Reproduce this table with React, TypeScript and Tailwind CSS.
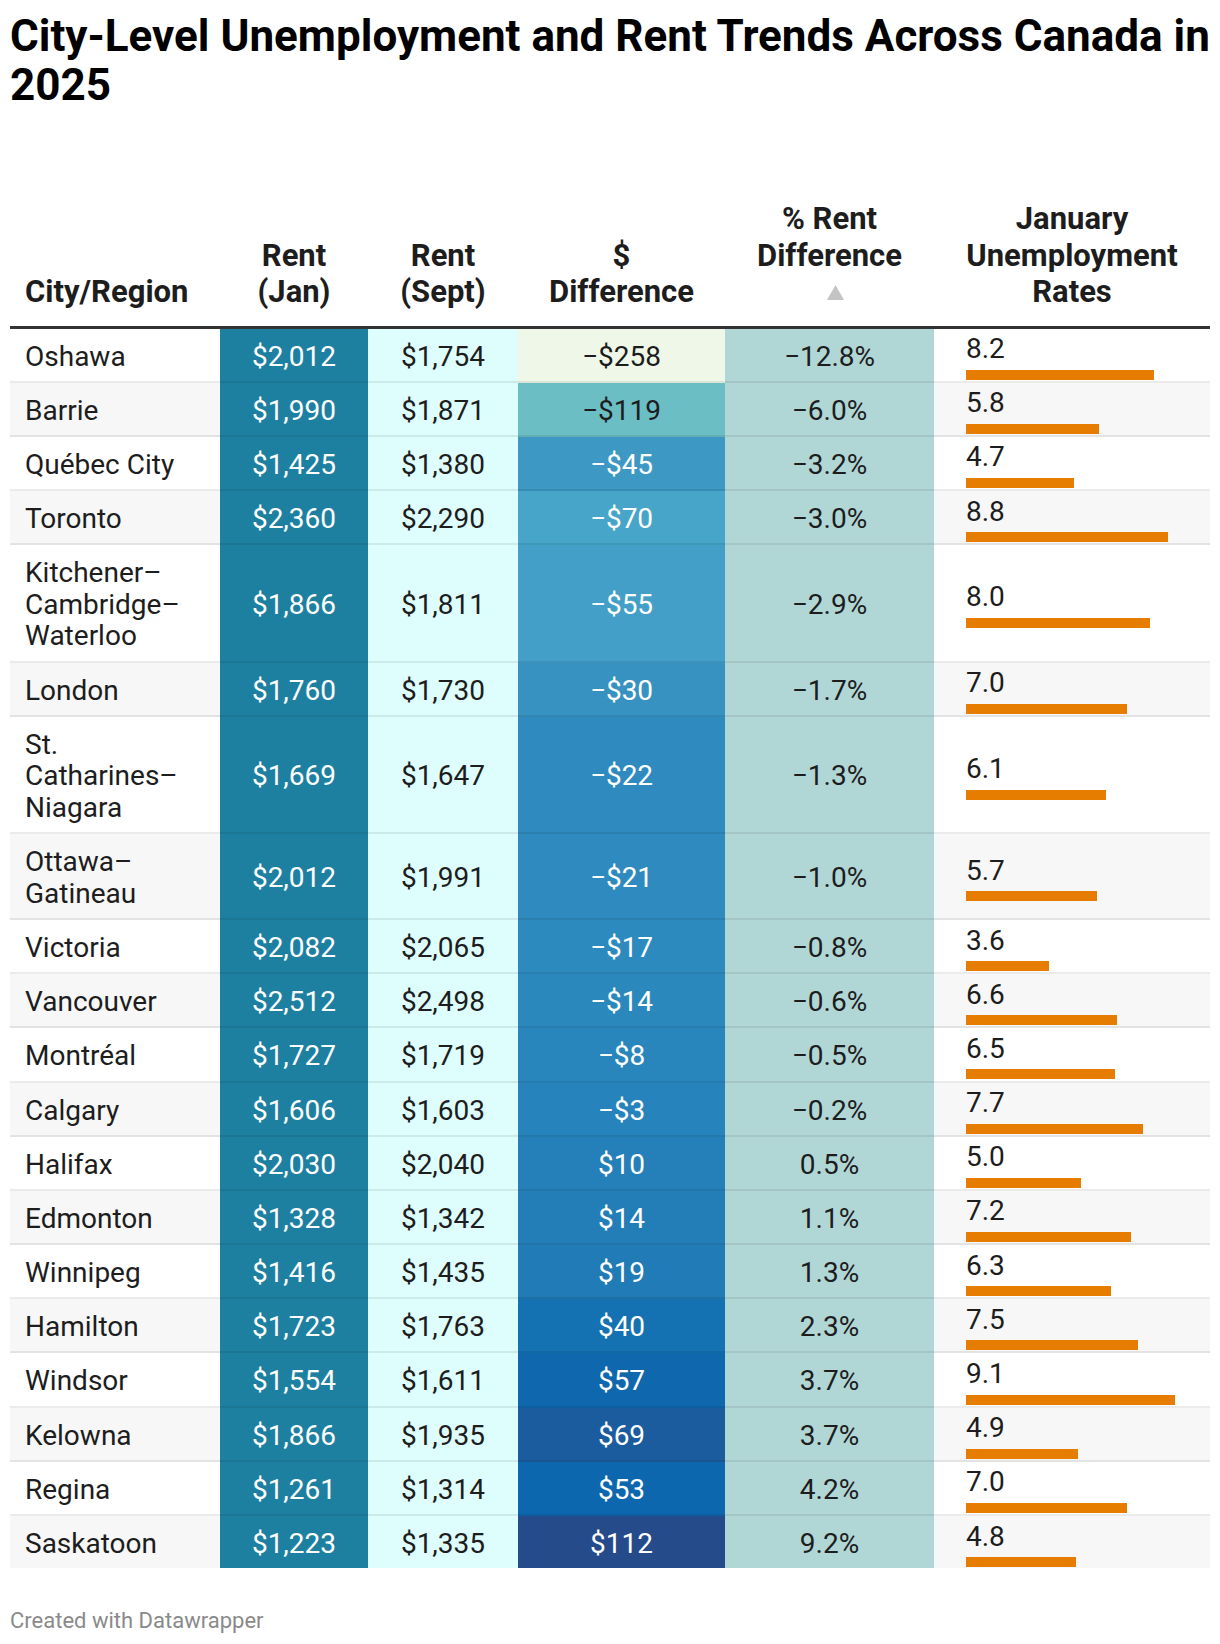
import React from "react"

interface Row {
  city: string
  jan: string
  sept: string
  diff: string
  diffBg: string
  diffDark?: boolean
  pct: string
  rate: number
}

// $ Difference cells carry their own colour from the scale
const rows: Row[] = [
  { city: "Oshawa", jan: "$2,012", sept: "$1,754", diff: "−$258", diffBg: "bg-[#eff8e8]", diffDark: true, pct: "−12.8%", rate: 8.2 },
  { city: "Barrie", jan: "$1,990", sept: "$1,871", diff: "−$119", diffBg: "bg-[#6cbec5]", diffDark: true, pct: "−6.0%", rate: 5.8 },
  { city: "Québec City", jan: "$1,425", sept: "$1,380", diff: "−$45", diffBg: "bg-[#3d98c4]", pct: "−3.2%", rate: 4.7 },
  { city: "Toronto", jan: "$2,360", sept: "$2,290", diff: "−$70", diffBg: "bg-[#46a5c8]", pct: "−3.0%", rate: 8.8 },
  { city: "Kitchener–Cambridge–Waterloo", jan: "$1,866", sept: "$1,811", diff: "−$55", diffBg: "bg-[#439fc7]", pct: "−2.9%", rate: 8.0 },
  { city: "London", jan: "$1,760", sept: "$1,730", diff: "−$30", diffBg: "bg-[#3792c2]", pct: "−1.7%", rate: 7.0 },
  { city: "St. Catharines–Niagara", jan: "$1,669", sept: "$1,647", diff: "−$22", diffBg: "bg-[#2f8bbf]", pct: "−1.3%", rate: 6.1 },
  { city: "Ottawa–Gatineau", jan: "$2,012", sept: "$1,991", diff: "−$21", diffBg: "bg-[#2f8bbf]", pct: "−1.0%", rate: 5.7 },
  { city: "Victoria", jan: "$2,082", sept: "$2,065", diff: "−$17", diffBg: "bg-[#2d8abe]", pct: "−0.8%", rate: 3.6 },
  { city: "Vancouver", jan: "$2,512", sept: "$2,498", diff: "−$14", diffBg: "bg-[#2b88bd]", pct: "−0.6%", rate: 6.6 },
  { city: "Montréal", jan: "$1,727", sept: "$1,719", diff: "−$8", diffBg: "bg-[#2986bc]", pct: "−0.5%", rate: 6.5 },
  { city: "Calgary", jan: "$1,606", sept: "$1,603", diff: "−$3", diffBg: "bg-[#2783bb]", pct: "−0.2%", rate: 7.7 },
  { city: "Halifax", jan: "$2,030", sept: "$2,040", diff: "$10", diffBg: "bg-[#2580b9]", pct: "0.5%", rate: 5.0 },
  { city: "Edmonton", jan: "$1,328", sept: "$1,342", diff: "$14", diffBg: "bg-[#237eb8]", pct: "1.1%", rate: 7.2 },
  { city: "Winnipeg", jan: "$1,416", sept: "$1,435", diff: "$19", diffBg: "bg-[#217bb6]", pct: "1.3%", rate: 6.3 },
  { city: "Hamilton", jan: "$1,723", sept: "$1,763", diff: "$40", diffBg: "bg-[#1471b2]", pct: "2.3%", rate: 7.5 },
  { city: "Windsor", jan: "$1,554", sept: "$1,611", diff: "$57", diffBg: "bg-[#0f67ad]", pct: "3.7%", rate: 9.1 },
  { city: "Kelowna", jan: "$1,866", sept: "$1,935", diff: "$69", diffBg: "bg-[#1a5c9e]", pct: "3.7%", rate: 4.9 },
  { city: "Regina", jan: "$1,261", sept: "$1,314", diff: "$53", diffBg: "bg-[#0d67ae]", pct: "4.2%", rate: 7.0 },
  { city: "Saskatoon", jan: "$1,223", sept: "$1,335", diff: "$112", diffBg: "bg-[#254b8a]", pct: "9.2%", rate: 4.8 },
]

const th = "align-bottom pb-[15px] text-[31px] font-bold leading-[36.5px] text-center border-b-[3px] border-[#333]"

export default function App() {
  return (
    <div className="w-[1220px] bg-white px-[10px] pt-[12px] pb-[20px] font-['Roboto',sans-serif] text-[#1d1d1d]">
      <h1 className="text-[44px] font-bold leading-[49px] text-black">
        City-Level Unemployment and Rent Trends Across Canada in 2025
      </h1>

      <table className="mt-[91px] w-full table-fixed border-separate border-spacing-0 text-[28px] leading-[31.6px]">
        <colgroup>
          <col className="w-[210px]" />
          <col className="w-[148px]" />
          <col className="w-[150px]" />
          <col className="w-[207px]" />
          <col className="w-[209px]" />
          <col className="w-[276px]" />
        </colgroup>
        <thead>
          <tr>
            <th className={`${th} pl-[15px] !text-left`}>City/Region</th>
            <th className={th}>
              Rent
              <br />
              (Jan)
            </th>
            <th className={th}>
              Rent
              <br />
              (Sept)
            </th>
            <th className={th}>
              $
              <br />
              Difference
            </th>
            <th className={th}>
              % Rent
              <br />
              Difference
              <div className="flex h-[36.5px] items-center justify-center pl-[12px]">
                <svg width="17" height="15" viewBox="0 0 17 15">
                  <path d="M8.5 0 L17 15 L0 15 Z" fill="#c4c4c4" />
                </svg>
              </div>
            </th>
            <th className={th}>
              January
              <br />
              Unemployment
              <br />
              Rates
            </th>
          </tr>
        </thead>
        <tbody>
          {rows.map((r, i) => {
            const zebra = i % 2 === 1 ? "bg-[#f7f7f7]" : "bg-white"
            const line = i < rows.length - 1 ? "border-b-2 border-black/[0.08]" : ""
            const cell = `pt-[12px] pb-[8.6px] align-middle text-center ${line}`
            return (
              <tr key={r.city}>
                <td className={`pt-[12px] pb-[8.6px] pl-[15px] pr-[12px] align-middle ${zebra} ${line}`}>{r.city}</td>
                <td className={`${cell} bg-[#1e80a1] text-white`}>{r.jan}</td>
                <td className={`${cell} bg-[#defefe]`}>{r.sept}</td>
                <td className={`${cell} ${r.diffBg} ${r.diffDark ? "text-[#1d1d1d]" : "text-white"}`}>{r.diff}</td>
                <td className={`${cell} bg-[#b1d6d6]`}>{r.pct}</td>
                <td className={`pl-[32px] pr-[14px] pt-[4.5px] pb-[1px] align-middle ${zebra} ${line}`}>
                  <div>{r.rate.toFixed(1)}</div>
                  <div className="mt-[5px] h-[10px] bg-[#e67c00]" style={{ width: `${r.rate * 22.95}px` }} />
                </td>
              </tr>
            )
          })}
        </tbody>
      </table>

      <div className="mt-[41px] text-[22px] leading-[24px] text-[#8a8a8a]">Created with Datawrapper</div>
    </div>
  )
}
